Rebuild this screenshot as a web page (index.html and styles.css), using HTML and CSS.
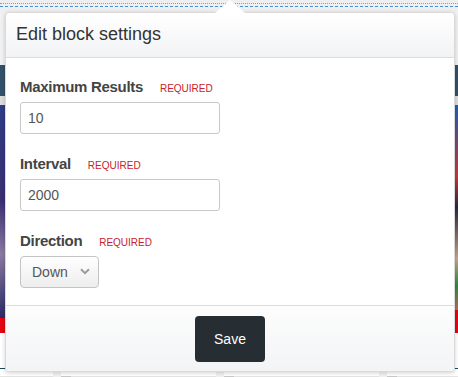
FILE: index.html
```html
<!DOCTYPE html>
<html>
	<head>
		<title>Edit block settings</title>

		<link rel="stylesheet" href="styles.css">
	</head>

	<body>
		<div class="toolbar">
			<div class="dotLine"></div>
			<div class="dashLine"></div>
		</div>

		<div class="viewport">
			<div class="track">
				<div class="card">
					<div class="cardTop"></div>
					<div class="cardGap"></div>
					<div class="cardImage"></div>
					<div class="cardTag"></div>
					<div class="cardText"></div>
					<div class="cardStars"><span class="starBox"></span><span class="star"></span><span class="star"></span><span class="star"></span><span class="star"></span><span class="star"></span></div>
				</div>
				<div class="card">
					<div class="cardTop"></div>
					<div class="cardGap"></div>
					<div class="cardImage"></div>
					<div class="cardTag"></div>
					<div class="cardText"></div>
					<div class="cardStars"><span class="starBox"></span><span class="star"></span><span class="star"></span><span class="star"></span><span class="star"></span><span class="star"></span></div>
				</div>
				<div class="card">
					<div class="cardTop"></div>
					<div class="cardGap"></div>
					<div class="cardImage"></div>
					<div class="cardTag"></div>
					<div class="cardText"></div>
					<div class="cardStars"><span class="starBox"></span><span class="star"></span><span class="star"></span><span class="star"></span><span class="star"></span><span class="star"></span></div>
				</div>
				<div class="card">
					<div class="cardTop"></div>
					<div class="cardGap"></div>
					<div class="cardImage alt"></div>
					<div class="cardTag"></div>
					<div class="cardText"></div>
					<div class="cardStars"><span class="starBox"></span><span class="star"></span><span class="star"></span><span class="star"></span><span class="star"></span><span class="star"></span></div>
				</div>
			</div>
		</div>

		<div class="popover">
			<div class="popHeader">Edit block settings</div>

			<div class="popBody">
				<div class="field">
					<label class="fieldLabel">Maximum Results <span class="required">REQUIRED</span></label>
					<input class="textInput" type="text" value="10">
				</div>
				<div class="field">
					<label class="fieldLabel">Interval <span class="required">REQUIRED</span></label>
					<input class="textInput" type="text" value="2000">
				</div>
				<div class="field">
					<label class="fieldLabel">Direction <span class="required">REQUIRED</span></label>
					<div class="selectBox">
						<span>Down</span>
						<svg width="10" height="7" viewBox="0 0 10 7"><path d="M1 1.2 L5 5.2 L9 1.2" fill="none" stroke="#9a9a9a" stroke-width="2"/></svg>
					</div>
				</div>
			</div>

			<div class="popFooter">
				<button class="saveButton">Save</button>
			</div>
		</div>
	</body>
</html>
```

FILE: styles.css
```css
body {
	margin: 0;
	background-color: #e7e7e7;
	font-family: "Liberation Sans", Arial, sans-serif;
	overflow: hidden;
	height: 377px;
}

.toolbar {
	height: 12px;
	background-color: #efefef;
	padding-top: 3px;
	box-sizing: border-box;
}

.dotLine {
	border-top: 1px dotted #9a9a9a;
}

.dashLine {
	margin-top: 2px;
	border-top: 1px dashed #4a8fd6;
}

/* carousel behind the popover, scrolled part way */
.viewport {
	width: 458px;
	height: 365px;
	overflow: hidden;
	background-color: #f1f1f1;
}

.track {
	display: flex;
	gap: 8px;
	margin-left: -102px;
	padding-top: 53px;
}

.card {
	flex: 0 0 155px;
	background-color: #fff;
}

.cardTop {
	height: 31px;
	background-color: #33516a;
}

.cardGap {
	height: 9px;
	background-color: #dcdcdc;
}

.cardImage {
	height: 213px;
	background: linear-gradient(180deg, #2f3c86 0%, #3b2f72 45%, #8a7aa0 70%, #2a2a66 100%);
}

.cardImage.alt {
	height: 205px;
	background: linear-gradient(180deg, #1f5fb0 0%, #c23a3a 35%, #2a2840 50%, #c9a48a 75%, #2e8b3e 88%, #b86a5a 100%);
}

.cardTag {
	height: 15px;
	background-color: #e30613;
}

.cardImage.alt + .cardTag {
	height: 23px;
}

.cardText {
	height: 36px;
	border-bottom: 1px solid #1b4a5a;
	box-sizing: border-box;
}

.cardStars {
	display: flex;
	align-items: center;
	gap: 5px;
	height: 10px;
	margin-top: 7px;
	background-color: #e4e4e4;
}

.starBox {
	width: 10px;
	height: 10px;
	margin-right: 4px;
	background-color: #c9c9c9;
}

.star {
	width: 8px;
	height: 8px;
	background-color: #8c8c8c;
}

.popover {
	position: absolute;
	left: 5px;
	top: 12px;
	width: 450px;
	height: 360px;
	box-sizing: border-box;
	border: 1px solid #dadada;
	border-radius: 4px;
	background-color: #fff;
	box-shadow: 0 1px 4px rgba(0, 0, 0, 0.18);
	display: flex;
	flex-direction: column;
}

.popover::before {
	content: "";
	position: absolute;
	left: 209px;
	top: -13px;
	border-left: 15px solid transparent;
	border-right: 15px solid transparent;
	border-bottom: 13px solid #fff;
}

.popHeader {
	padding: 11px 10px 13px 10px;
	font-size: 18px;
	line-height: 20px;
	color: #333;
	background: linear-gradient(180deg, #ffffff 0%, #f2f3f5 100%);
	border-bottom: 1px solid #dcdcdc;
	border-radius: 4px 4px 0 0;
}

.popBody {
	padding: 19px 14px 0 14px;
	flex: 1;
	min-height: 0;
}

.field {
	margin-bottom: 20px;
}

.field:last-child {
	margin-bottom: 0;
}

.fieldLabel {
	display: block;
	height: 20px;
	margin-bottom: 5px;
	font-size: 15px;
	line-height: 20px;
	font-weight: bold;
	letter-spacing: -0.3px;
	color: #444;
}

.required {
	margin-left: 13px;
	font-size: 10px;
	line-height: 10px;
	font-weight: normal;
	letter-spacing: 0;
	color: #c8232c;
}

.textInput {
	display: block;
	width: 200px;
	height: 32px;
	box-sizing: border-box;
	padding: 0 7px;
	border: 1px solid #c8c8c8;
	border-radius: 3px;
	font-family: "Liberation Sans", Arial, sans-serif;
	font-size: 14px;
	color: #555;
	outline: none;
}

.selectBox {
	display: flex;
	align-items: center;
	justify-content: space-between;
	width: 79px;
	height: 32px;
	box-sizing: border-box;
	padding: 0 8px 0 11px;
	border: 1px solid #c4c4c4;
	border-radius: 4px;
	background: linear-gradient(180deg, #ffffff 0%, #ededed 100%);
	font-size: 14px;
	color: #555;
}

.selectBox svg {
	margin-top: -2px;
}

.popFooter {
	display: flex;
	justify-content: center;
	padding: 10px 0 9px 0;
	background: linear-gradient(180deg, #fdfdfd 0%, #f3f4f6 100%);
	border-top: 1px solid #dcdcdc;
	border-radius: 0 0 4px 4px;
}

.saveButton {
	width: 70px;
	height: 46px;
	border: none;
	border-radius: 4px;
	background-color: #262d33;
	color: #fff;
	font-family: "Liberation Sans", Arial, sans-serif;
	font-size: 14px;
}
```
